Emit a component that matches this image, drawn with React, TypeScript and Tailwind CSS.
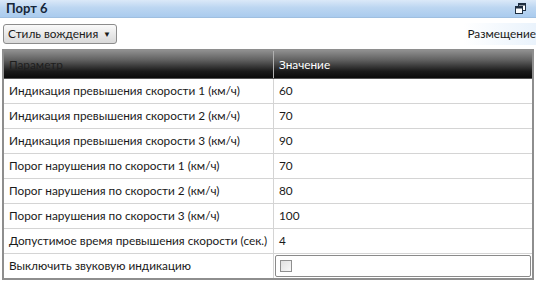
import React from "react";

const rows: [string, string][] = [
  ["Индикация превышения скорости 1 (км/ч)", "60"],
  ["Индикация превышения скорости 2 (км/ч)", "70"],
  ["Индикация превышения скорости 3 (км/ч)", "90"],
  ["Порог нарушения по скорости 1 (км/ч)", "70"],
  ["Порог нарушения по скорости 2 (км/ч)", "80"],
  ["Порог нарушения по скорости 3 (км/ч)", "100"],
  ["Допустимое время превышения скорости (сек.)", "4"],
];

export default function App() {
  return (
    <div
      className="w-[536px] h-[281px] bg-white overflow-hidden flex flex-col text-[11.8px] text-[#1a1a1a]"
      style={{ fontFamily: 'Lato, "Noto Sans", sans-serif' }}
    >
      <div className="h-[18px] shrink-0 flex items-center justify-between pl-[6px] pr-[10px] bg-[linear-gradient(#dbe9f8,#bcd6f1_45%,#aacbee)] border-b border-[#9fbfe0]">
        <span className="font-bold text-[13px] text-[#15263a]">Порт 6</span>
        <svg width="11" height="11" viewBox="0 0 11 11">
          <rect x="3.5" y="0.5" width="7" height="7" fill="#fff" stroke="#1e2e40" />
          <rect x="3.5" y="0.5" width="7" height="2" fill="#1e2e40" />
          <rect x="0.5" y="3.5" width="7" height="7" fill="#fff" stroke="#1e2e40" />
          <rect x="0.5" y="3.5" width="7" height="2" fill="#1e2e40" />
        </svg>
      </div>
      <div className="h-[31px] shrink-0 flex items-center justify-between pl-[3px]">
        <div className="w-[114px] h-[20px] flex items-center justify-between pl-[4px] pr-[5px] rounded-[3px] border border-[#8c8c8c] bg-[linear-gradient(#fafafa,#e9e9e9_50%,#d9d9d9)]">
          <span className="whitespace-nowrap">Стиль вождения</span>
          <span className="text-[8px]">▼</span>
        </div>
        <div className="h-[22px] flex items-center pl-[4px] bg-[linear-gradient(90deg,#ffffff,#eaf3fc)]">
          <span className="whitespace-nowrap">Размещение</span>
        </div>
      </div>
      <div className="flex-1 mx-[2px] mb-[1px] border-2 border-[#8e8e8e] flex flex-col">
        <div className="h-[28px] shrink-0 flex bg-[linear-gradient(#8c8c8c,#5e5e5e_35%,#1a1a1a_75%,#0a0a0a)] border-b border-[#555]">
          <div className="w-[270px] shrink-0 flex items-center pl-[5px] text-[#1e1e1e] border-r border-[#b0b0b0]">
            Параметр
          </div>
          <div className="flex-1 flex items-center pl-[5px] text-white">Значение</div>
        </div>
        {rows.map(([p, v]) => (
          <div key={p} className="h-[25px] shrink-0 flex border-b border-[#d4d4d4]">
            <div className="w-[270px] shrink-0 flex items-center pl-[5px] border-r border-[#d4d4d4] whitespace-nowrap">
              {p}
            </div>
            <div className="flex-1 flex items-center pl-[5px]">{v}</div>
          </div>
        ))}
        <div className="flex-1 flex">
          <div className="w-[270px] shrink-0 flex items-center pl-[5px] border-r border-[#d4d4d4]">
            Выключить звуковую индикацию
          </div>
          <div className="flex-1 flex items-center p-[1px]">
            <div className="w-full h-full border border-[#8a8a8a] rounded-[2px] flex items-center pl-[4px]">
              <div className="w-[12px] h-[12px] border border-[#8f8f8f] bg-[linear-gradient(135deg,#e0e0e0,#f8f8f8)]" />
            </div>
          </div>
        </div>
      </div>
    </div>
  );
}
